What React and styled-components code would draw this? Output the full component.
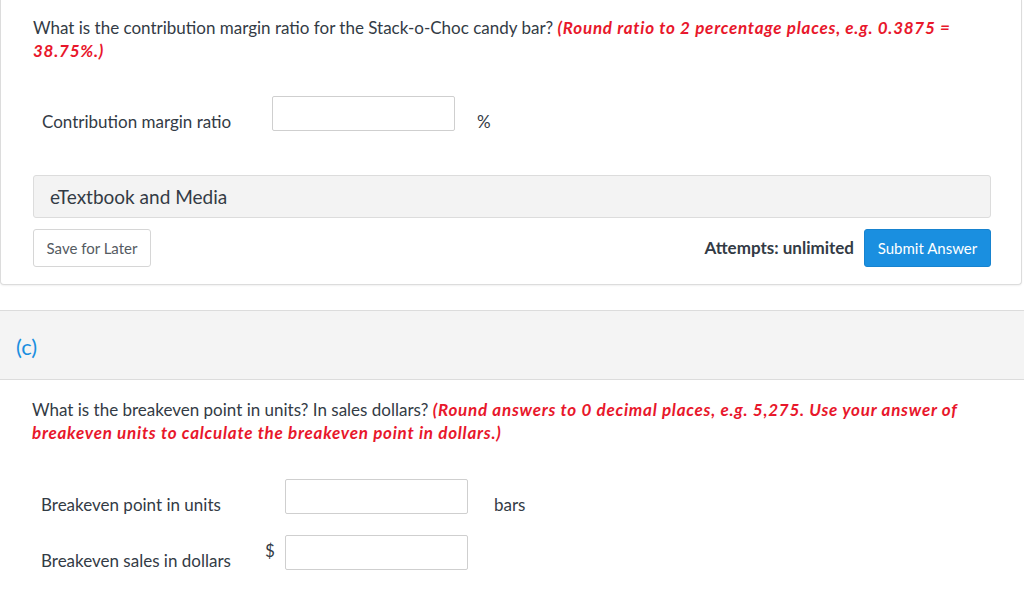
import styled, { createGlobalStyle } from "styled-components";

const GlobalStyle = createGlobalStyle`
    body {
        margin: 0;
        background: #ffffff;
        font-family: Lato, "Open Sans", "Liberation Sans", sans-serif;
        color: #333b45;
    }
`;

function AnswerRow({ label, labelWidth, prefix, unit, unitGap }) {
    return (
        <Row>
            <Label style={{ width: labelWidth }}>{label}</Label>
            {prefix !== undefined && <Prefix>{prefix}</Prefix>}
            <AnswerInput type="text" />
            {unit && <Unit $gap={unitGap}>{unit}</Unit>}
        </Row>
    );
}

function App() {
    return (
        <Page>
            <GlobalStyle />

            {/* 이전 문항 카드 (b) */}
            <Card>
                <Question>
                    What is the contribution margin ratio for the Stack-o-Choc candy bar?{" "}
                    <Hint>(Round ratio to 2 percentage places, e.g. 0.3875 = 38.75%.)</Hint>
                </Question>

                <Answers $top={34} $bottom={44}>
                    <AnswerRow label="Contribution margin ratio" labelWidth={230} unit="%" unitGap={22} />
                </Answers>

                <MediaBar>eTextbook and Media</MediaBar>

                <Footer>
                    <SaveButton>Save for Later</SaveButton>
                    <FooterRight>
                        <Attempts>Attempts: unlimited</Attempts>
                        <SubmitButton>Submit Answer</SubmitButton>
                    </FooterRight>
                </Footer>
            </Card>

            {/* 다음 문항 (c) */}
            <PartHeader>
                <PartLabel>(c)</PartLabel>
            </PartHeader>

            <PartBody>
                <Question>
                    What is the breakeven point in units? In sales dollars?{" "}
                    <Hint>
                        (Round answers to 0 decimal places, e.g. 5,275. Use your answer of breakeven units to
                        calculate the breakeven point in dollars.)
                    </Hint>
                </Question>

                <Answers $top={35} $bottom={0}>
                    <AnswerRow label="Breakeven point in units" labelWidth={244} unit="bars" unitGap={26} />
                    <AnswerRow label="Breakeven sales in dollars" labelWidth={224} prefix="$" />
                </Answers>
            </PartBody>
        </Page>
    );
}

const Page = styled.div`
    width: 1024px;
    height: 594px;
    overflow: hidden;
`;

const Card = styled.div`
    width: 1022px;
    box-sizing: border-box;
    padding: 16px 30px 17px 32px;
    background: #ffffff;
    border: 1px solid #dcdcdc;
    border-top: none;
    border-radius: 0 0 4px 4px;
    box-shadow: 0 1px 2px rgba(0, 0, 0, 0.06);
`;

const Question = styled.p`
    margin: 0;
    font-size: 17px;
    line-height: 23px;
    color: #333b45;
    padding-right: 20px;
`;

const Hint = styled.em`
    color: #e8172b;
    font-weight: 700;
    letter-spacing: 0.75px;
`;

const Answers = styled.div`
    display: flex;
    flex-direction: column;
    gap: 21px;
    margin: ${(p) => p.$top}px 0 ${(p) => p.$bottom}px 9px;
`;

const Row = styled.div`
    display: flex;
    align-items: flex-start;
    height: 35px;
`;

const Label = styled.span`
    padding-top: 16px;
    font-size: 17px;
    line-height: 20px;
    color: #333b45;
`;

const Prefix = styled.span`
    width: 20px;
    padding-top: 6px;
    font-size: 17px;
    line-height: 20px;
`;

const AnswerInput = styled.input`
    width: 183px;
    height: 35px;
    box-sizing: border-box;
    border: 1px solid #cfcfcf;
    border-radius: 2px;
    margin: 0;
    padding: 0 8px;
    font: inherit;
`;

const Unit = styled.span`
    margin-left: ${(p) => p.$gap || 20}px;
    padding-top: 16px;
    font-size: 17px;
    line-height: 20px;
    color: #333b45;
`;

const MediaBar = styled.div`
    height: 43px;
    box-sizing: border-box;
    padding: 0 16px;
    display: flex;
    align-items: center;
    background: #f3f3f3;
    border: 1px solid #dcdcdc;
    border-radius: 3px;
    font-size: 19px;
    color: #333b45;
`;

const Footer = styled.div`
    display: flex;
    justify-content: space-between;
    align-items: center;
    margin-top: 11px;
`;

const FooterRight = styled.div`
    display: flex;
    align-items: center;
    gap: 10px;
`;

const SaveButton = styled.button`
    height: 38px;
    width: 118px;
    background: #ffffff;
    border: 1px solid #d6d6d6;
    border-radius: 3px;
    font-family: inherit;
    font-size: 15px;
    color: #555b62;
    cursor: pointer;
`;

const Attempts = styled.span`
    font-size: 17px;
    font-weight: 700;
    color: #333b45;
    margin-top: -2px;
`;

const SubmitButton = styled.button`
    height: 38px;
    width: 127px;
    background: #1a8fe0;
    border: 1px solid #1783cf;
    border-radius: 3px;
    font-family: inherit;
    font-size: 15px;
    color: #ffffff;
    cursor: pointer;
`;

const PartHeader = styled.div`
    margin-top: 25px;
    height: 70px;
    box-sizing: border-box;
    background: #f4f4f4;
    border-top: 1px solid #dcdcdc;
    border-bottom: 1px solid #dcdcdc;
    display: flex;
    align-items: center;
    padding-left: 16px;
`;

const PartLabel = styled.span`
    font-size: 22px;
    color: #1a8fe0;
    margin-top: 2px;
`;

const PartBody = styled.div`
    padding: 18px 31px 0 32px;
`;

export default App;
